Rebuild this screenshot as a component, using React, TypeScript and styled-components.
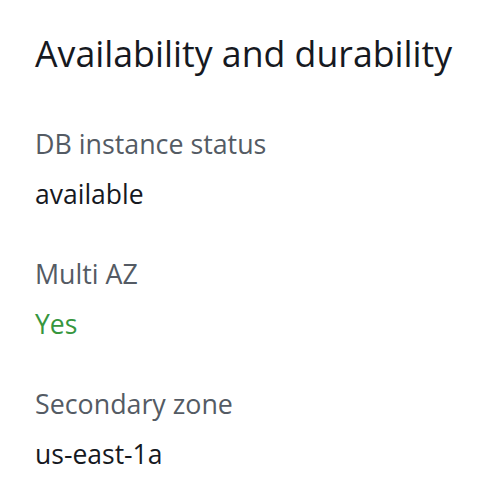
import React from "react";
import styled, { createGlobalStyle } from "styled-components";

const Global = createGlobalStyle`
  html, body { margin: 0; padding: 0; background: #ffffff; }
  body { font-family: "Open Sans", "Noto Sans", Arial, sans-serif; }
`;

const Panel = styled.section`
  width: 480px;
  height: 492px;
  box-sizing: border-box;
  padding: 31px 0 0 35px;
  display: flex;
  flex-direction: column;
`;

const Title = styled.h2`
  margin: 0 0 51px 0;
  font-size: 35.7px;
  line-height: 44px;
  font-weight: 400;
  color: #16191f;
`;

const Fields = styled.dl`
  margin: 0;
  display: flex;
  flex-direction: column;
  gap: 44px;
`;

const Field = styled.div`
  display: flex;
  flex-direction: column;
  gap: 14px;
`;

const Label = styled.dt`
  font-size: 26.8px;
  line-height: 36px;
  color: #545b64;
`;

const Value = styled.dd<{ $tone?: "success" }>`
  margin: 0;
  font-size: 26.5px;
  line-height: 36px;
  color: ${(p) => (p.$tone === "success" ? "#36963e" : "#16191f")};
`;

const fields: { label: string; value: string; tone?: "success" }[] = [
  { label: "DB instance status", value: "available" },
  { label: "Multi AZ", value: "Yes", tone: "success" },
  { label: "Secondary zone", value: "us-east-1a" },
];

export default function App() {
  return (
    <>
      <Global />
      <Panel>
        <Title>Availability and durability</Title>
        <Fields>
          {fields.map((f) => (
            <Field key={f.label}>
              <Label>{f.label}</Label>
              <Value $tone={f.tone}>{f.value}</Value>
            </Field>
          ))}
        </Fields>
      </Panel>
    </>
  );
}
